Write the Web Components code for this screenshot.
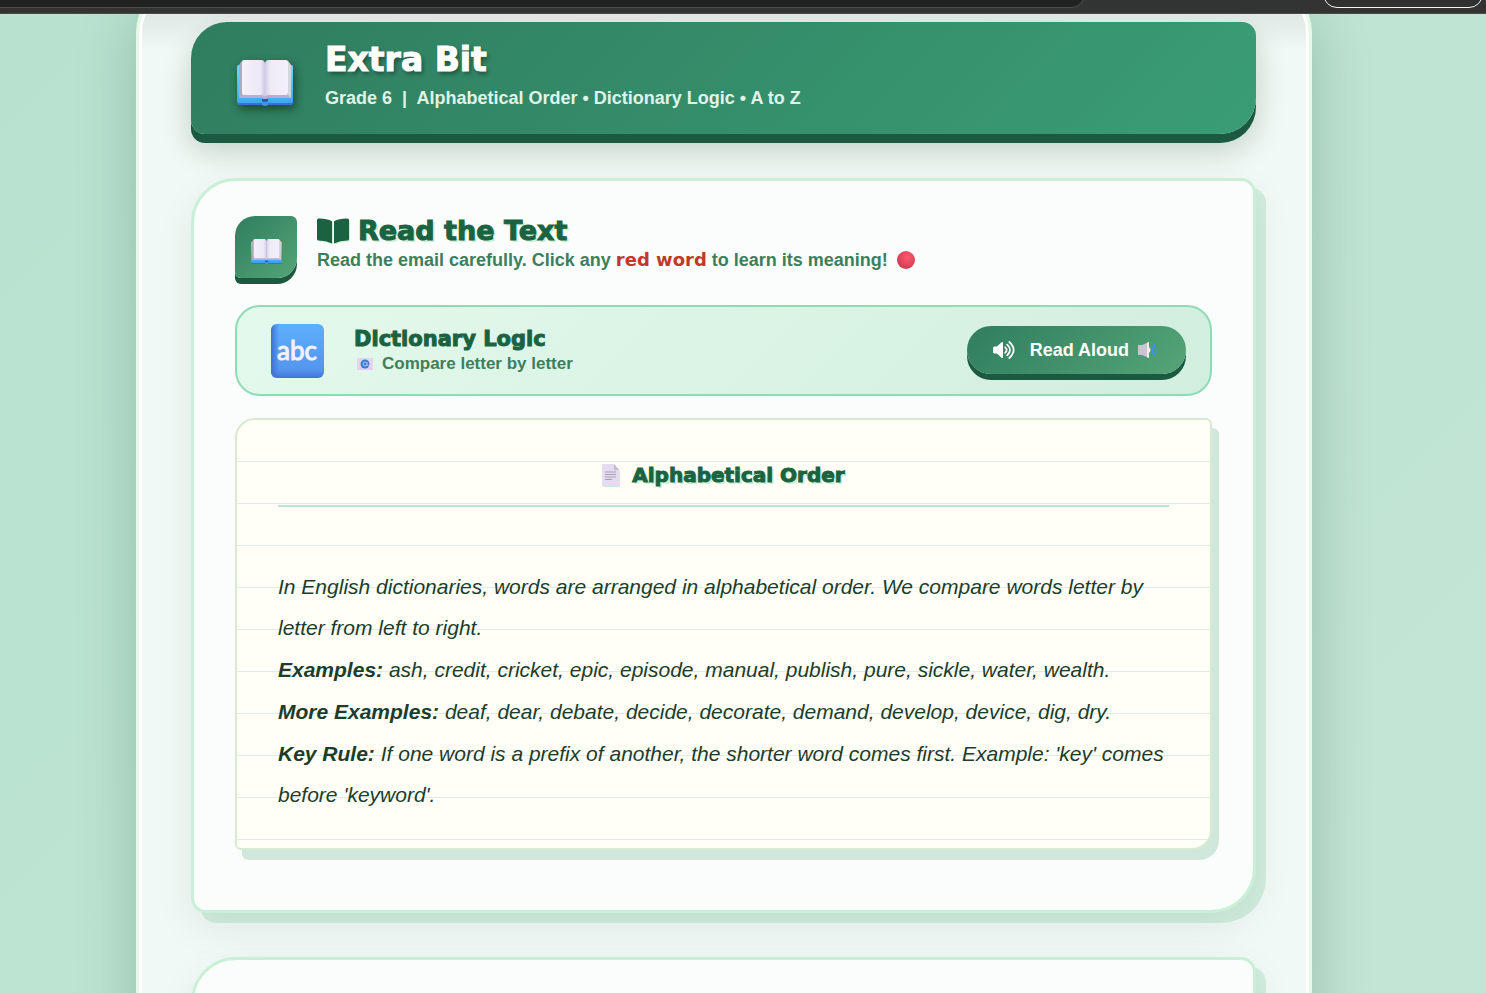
<!DOCTYPE html>
<html lang="en">
<head>
<meta charset="utf-8">
<title>Extra Bit</title>
<style>
  html, body { margin: 0; height: 100%; overflow: hidden; }
  body { font-family: "Liberation Sans", Arial, sans-serif; color: #1c3d2c; --display: "Arial Black", "DejaVu Sans", sans-serif; }
</style>
</head>
<body>
<reader-page>
  <lesson-header heading="Extra Bit">Grade 6 &nbsp;|&nbsp; Alphabetical Order • Dictionary Logic • A to Z</lesson-header>
  <lesson-card>
    <section-title heading="Read the Text">Read the email carefully. Click any <strong>red word</strong> to learn its meaning!</section-title>
    <topic-banner heading="Dictionary Logic" note="Compare letter by letter"></topic-banner>
    <note-paper heading="Alphabetical Order">
      <p>In English dictionaries, words are arranged in alphabetical order. We compare words letter by letter from left to right.</p>
      <p><b>Examples:</b> ash, credit, cricket, epic, episode, manual, publish, pure, sickle, water, wealth.</p>
      <p><b>More Examples:</b> deaf, dear, debate, decide, decorate, demand, develop, device, dig, dry.</p>
      <p><b>Key Rule:</b> If one word is a prefix of another, the shorter word comes first. Example: 'key' comes before 'keyword'.</p>
    </note-paper>
  </lesson-card>
  <lesson-card></lesson-card>
</reader-page>
<script>
const define = (name, html) => {
  const tpl = document.createElement('template');
  tpl.innerHTML = html;
  customElements.define(name, class extends HTMLElement {
    constructor() {
      super();
      this.attachShadow({ mode: 'open' }).append(tpl.content.cloneNode(true));
    }
    connectedCallback() {
      for (const el of this.shadowRoot.querySelectorAll('[data-attr]')) {
        el.textContent = this.getAttribute(el.dataset.attr) || '';
      }
    }
  });
};

define('book-icon', `
  <style>:host { display: block; } svg { display: block; width: 100%; }</style>
  <svg viewBox="0 0 56 46" aria-hidden="true">
    <defs>
      <linearGradient id="side" x1="0" y1="0" x2="0" y2="1"><stop offset="0" stop-color="#6fdcfb"/><stop offset="1" stop-color="#3ea6f2"/></linearGradient>
      <linearGradient id="left"><stop offset="0" stop-color="#f4f1fa"/><stop offset=".8" stop-color="#ece8f6"/><stop offset="1" stop-color="#cfc9e3"/></linearGradient>
      <linearGradient id="right"><stop offset="0" stop-color="#d3cde8"/><stop offset=".25" stop-color="#efecf8"/><stop offset="1" stop-color="#f2effa"/></linearGradient>
    </defs>
    <rect y="5" width="56" height="40" rx="2" fill="#3c6fd0"/>
    <rect y="5" width="56" height="38" rx="2" fill="url(#side)"/>
    <path d="M2 5 5 1h19l4 3 4-3h19l3 4v33H31l-3 2-3-2H2z" fill="#b7aed0"/>
    <path d="M2 5 5 1v34l-3 3z" fill="#a9adbd"/><path d="m54 5-3-4v34l3 3z" fill="#d2d6df"/>
    <path d="M7 0h17q4 0 4 4v33q-1-2-4-2H7q-2 0-2-2V2q0-2 2-2z" fill="url(#left)"/>
    <path d="M49 0H32q-4 0-4 4v33q1-2 4-2h17q2 0 2-2V2q0-2-2-2z" fill="url(#right)"/>
    <path d="M25 39h6v2q-3 3-6 0z" fill="#265aa8"/><path d="M25 43q3-3 6 0v2q-3 2-6 0z" fill="#3e92e8"/>
  </svg>`);

define('browser-edge', `
  <style>
    :host { flex: none; display: grid; grid-template-columns: 1085fr 238fr 160fr 3fr; height: 13px; background: #333; border-bottom: 1px solid #4a4a4a; overflow: hidden; position: relative; z-index: 1; }
    .field, .pill { box-sizing: border-box; height: 28px; margin-top: -20px; }
    .field { background: #222; border: 1px solid #4c4c4c; border-left: 0; border-radius: 0 22px 22px 0; }
    .pill { grid-column: 3; border: 1px solid #f5f5f5; border-radius: 20px; background: #303030; }
  </style>
  <div class="field"></div><div class="pill"></div>`);

define('reader-page', `
  <style>
    :host { display: flex; flex-direction: column; height: 100%; overflow: hidden; background: linear-gradient(135deg, #b8e2cf, #c3e5d5); }
    main { padding: 0 174px 0 136px; }
    .panel { margin-top: -28px; padding: 33px 53px 60px 52px; display: grid; gap: 44px; border: 3px solid #e6f9e6; border-radius: 46px;
      background: linear-gradient(rgba(0,0,0,.1), rgba(0,0,0,.06) 30px, transparent 62px), #f0f9f5;
      box-shadow: inset 0 0 0 3px #fff, 0 20px 60px rgba(0,50,30,.22); }
  </style>
  <browser-edge></browser-edge>
  <main><div class="panel"><slot></slot></div></main>`);

define('lesson-header', `
  <style>
    :host { display: flex; align-items: flex-start; box-sizing: border-box; height: 112px; padding: 18px 46px; gap: 32px; color: #fff;
      background: linear-gradient(135deg, #2f7d5f, #3a9d75); border-radius: 36px 14px 36px 14px;
      box-shadow: 0 9px 0 #1b5a40, 0 16px 30px rgba(0,40,20,.2); }
    book-icon { width: 56px; margin-top: 20px; filter: drop-shadow(2px 4px 5px rgba(0,0,0,.45)); }
    h1 { margin: 0; font: 900 33px/40px var(--display); -webkit-text-stroke: 1px; text-shadow: 2px 3px 4px rgba(0,0,0,.4); }
    p { margin: 7px 0 0; font-weight: 700; font-size: 18px; line-height: 22px; color: #e0f3e9; }
  </style>
  <book-icon></book-icon>
  <div><h1 data-attr="heading"></h1><p><slot></slot></p></div>`);

define('lesson-card', `
  <style>
    :host { display: grid; gap: 22px; align-content: start; padding: 35px 41px 60px; background: #fbfdfc; border: 3px solid #c9f0d6;
      border-radius: 45px 15px 45px 15px; box-shadow: 0 14px 40px rgba(0,30,10,.07), 10px 10px 0 #d0eddd; }
  </style>
  <slot></slot>`);

define('section-title', `
  <style>
    :host { display: flex; gap: 20px; height: 67px; }
    .tile { box-sizing: border-box; width: 62px; height: 62px; padding: 23px 15px 0 16px; background: linear-gradient(135deg, #2f7d5f, #55a577);
      border-radius: 20px 6px 20px 6px; box-shadow: 0 6px 0 #1b5a40; }
    h2 { display: flex; align-items: center; gap: 9px; margin: 0; font: 900 27px/30px var(--display); -webkit-text-stroke: 1px; color: #1b6340; text-shadow: 2px 2px 0 #c9f0d6; }
    h2 svg { width: 32px; height: 26px; filter: drop-shadow(1px 1px 0 #c9f0d6); }
    p { display: flex; align-items: center; gap: 9px; margin: 2px 0 0; font-weight: 700; font-size: 18px; line-height: 24px; color: #3d7f5c; }
    ::slotted(strong) { font-family: var(--display); font-size: 18px; font-weight: 900; color: #c0392b; }
    i { width: 18px; height: 18px; border-radius: 50%; background: radial-gradient(circle at 60% 35%, #ff5a70, #e0455c 50%, #b8304f); }
  </style>
  <div class="tile"><book-icon></book-icon></div>
  <div>
    <h2>
      <svg viewBox="0 0 32 26" fill="#1b6340" aria-hidden="true"><path d="M15 3.200v22.200Q9 22.500 1.600 22.500 0 22.500 0 21V2Q0 .500 1.600 .500 9.500.300 15 3.200zM17 3.200v22.200q6-2.900 13.400-2.900 1.600 0 1.600-1.500V2Q32 .500 30.400.500 22.500.300 17 3.200z"/></svg>
      <span data-attr="heading"></span>
    </h2>
    <p><span><slot></slot></span><i></i></p>
  </div>`);

define('topic-banner', `
  <style>
    :host { display: flex; align-items: center; box-sizing: border-box; height: 91px; padding: 0 24px 0 34px; border: 2px solid #8edbb5; border-radius: 25px;
      background: linear-gradient(135deg, #e3f9ec, #d2eedf); }
    .abc { width: 53px; height: 54px; margin-right: 30px; }
    .text { flex: 1; }
    h3 { margin: 0; font: 900 21px/26px var(--display); -webkit-text-stroke: 1px; color: #1b6340; }
    p { display: flex; align-items: center; gap: 9px; margin: 0; padding-left: 3px; font-weight: 700; font-size: 17px; line-height: 24px; color: #3d7f5c; }
    p svg { width: 16px; height: 12px; }
    button { display: flex; align-items: center; height: 48px; margin: 0 0 2px; padding: 0 29px 0 26px; border: 0; border-radius: 25px; color: #fff;
      font: 700 18px/24px "Liberation Sans", Arial, sans-serif; background: linear-gradient(135deg, #2f7d5f, #55a577); box-shadow: 0 6px 0 #1b5a40; }
    button svg:first-child { width: 22px; height: 18px; margin-right: 15px; }
    button svg:last-child { width: 19px; height: 16px; margin-left: 9px; }
  </style>
  <svg class="abc" viewBox="0 0 53 54" aria-hidden="true">
    <defs><linearGradient id="g" x1="0" y1="0" x2="0" y2="1"><stop offset="0" stop-color="#5cb0fb"/><stop offset=".85" stop-color="#5595ee"/><stop offset="1" stop-color="#4472d8"/></linearGradient>
    <linearGradient id="h"><stop offset="0" stop-color="#3f6fd2"/><stop offset=".15" stop-color="#3f6fd2" stop-opacity="0"/></linearGradient></defs>
    <rect width="53" height="54" rx="6" fill="url(#g)"/><rect width="53" height="54" rx="6" fill="url(#h)"/>
    <text x="26" y="36" text-anchor="middle" font-family="Lato, sans-serif" font-size="26" fill="#f6f0ff" stroke="#f6f0ff" stroke-width="1">abc</text>
  </svg>
  <div class="text">
    <h3 data-attr="heading"></h3>
    <p><svg viewBox="0 0 16 12" aria-hidden="true"><rect width="16" height="12" fill="#e3d5ee"/><path d="M0 12 5 7h6l5 5z" fill="#e8c8f4"/><circle cx="8" cy="6" r="4.500" fill="#3d7bd0"/><circle cx="8" cy="6" r="2" fill="none" stroke="#a9c9f2"/><path d="M10 4v3.500h2" fill="none" stroke="#a9c9f2" stroke-width=".7"/></svg><span data-attr="note"></span></p>
  </div>
  <button type="button">
    <svg viewBox="0 0 22 18" aria-hidden="true"><path d="M1.500 5.500H4L8.500 1.200Q10 .500 10 2v14q0 1.500-1.500.800L4 12.500H1.500Q0 12.500 0 11V7q0-1.500 1.500-1.500z" fill="#fff"/><path d="M12.200 6.300q3 2.700 0 5.400M14.200 3.600q5.600 5.400 0 10.800M16.300 1q8.600 8 0 16" fill="none" stroke="#fff" stroke-width="1.800" stroke-linecap="round"/></svg>
    <span>Read Aloud</span>
    <svg viewBox="0 0 19 16" aria-hidden="true"><path d="M0 3h4l7-3v16l-7-3H0z" fill="#cbc3d2"/><path d="M9 .8 11 0v16l-2-.8z" fill="#eeeaf2"/><path d="M11 5q3 3 0 6z" fill="#f5f2f8"/><path d="M13.500 4q2.500 4 0 8M15.500 1.500q4.500 6.500 0 13" fill="none" stroke="#3f93f0" stroke-width="1.500"/></svg>
  </button>`);

define('note-paper', `
  <style>
    :host { display: block; padding: 41px 41px 33px; border: 2px solid #d8ead0; border-radius: 20px 6px 20px 6px; box-shadow: 7px 10px 0 #d0e8db;
      background: repeating-linear-gradient(transparent 0 41px, #e2ece7 41px 42px), #fffff7; background-origin: padding-box; }
    h3 { display: flex; justify-content: center; align-items: center; gap: 12px; margin: 0 0 59px; padding-bottom: 16px; border-bottom: 2px solid #b9e6d1;
      font: 900 20px/28px var(--display); -webkit-text-stroke: 1px; color: #1b6340; text-shadow: 2px 2px 0 #c9f0d6; }
    h3 svg { width: 18px; height: 22px; filter: drop-shadow(1px 1px 0 #c9f0d6); }
    .body { display: grid; gap: 1px; font-style: italic; font-size: 21px; line-height: 41px; color: #1c3d2c; }
    ::slotted(p) { margin: 0; }
  </style>
  <h3><svg viewBox="0 0 18 22" aria-hidden="true"><path d="M0 0h12l5 6v16H0z" fill="#e5dcf1"/><path d="M12 0v6h5z" fill="#c3bad0"/><path d="M3 8h11M3 10.500h11M3 13h11M3 15.500h7" stroke="#a79fb2"/></svg><span data-attr="heading"></span></h3>
  <div class="body"><slot></slot></div>`);
</script>
</body>
</html>
